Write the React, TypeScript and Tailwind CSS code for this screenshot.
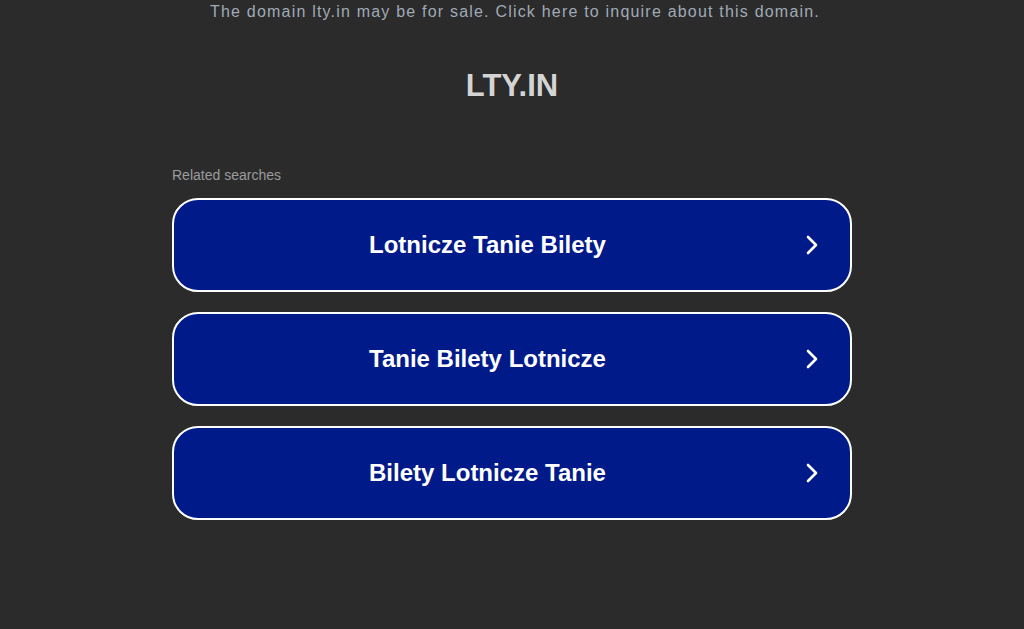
import React from 'react';

const searches = ['Lotnicze Tanie Bilety', 'Tanie Bilety Lotnicze', 'Bilety Lotnicze Tanie'];

const Chevron = () => (
  <svg width="14" height="20" viewBox="0 0 14 20" fill="none">
    <path d="M3 2 L11 10 L3 18" stroke="white" strokeWidth="2.6" strokeLinecap="round" strokeLinejoin="round" />
  </svg>
);

const App = () => {
  return (
    <div className="w-full h-[629px] bg-[#2b2b2b] flex flex-col items-center font-['Liberation_Sans',Arial,sans-serif]">
      <div className="pt-[2px] ml-[6px] text-[16px] leading-[20px] tracking-[1.2px] text-[#a0aab6]">
        The domain lty.in may be for sale. Click here to inquire about this domain.
      </div>
      <h1 className="mt-[46px] text-[31px] leading-[36px] font-bold text-[#d4d4d4]">LTY.IN</h1>
      <div className="mt-[63px] w-[680px]">
        <div className="text-[14px] leading-[16px] text-[#9b9b9b]">Related searches</div>
        <div className="mt-[15px] flex flex-col gap-[20px]">
          {searches.map((s) => (
            <div
              key={s}
              className="h-[94px] rounded-[26px] border-2 border-white bg-[#011a8a] flex items-center pr-[31px]"
            >
              <span className="flex-1 text-center pr-[4px] text-[24px] font-bold text-white">{s}</span>
              <Chevron />
            </div>
          ))}
        </div>
      </div>
    </div>
  );
};

export default App;
